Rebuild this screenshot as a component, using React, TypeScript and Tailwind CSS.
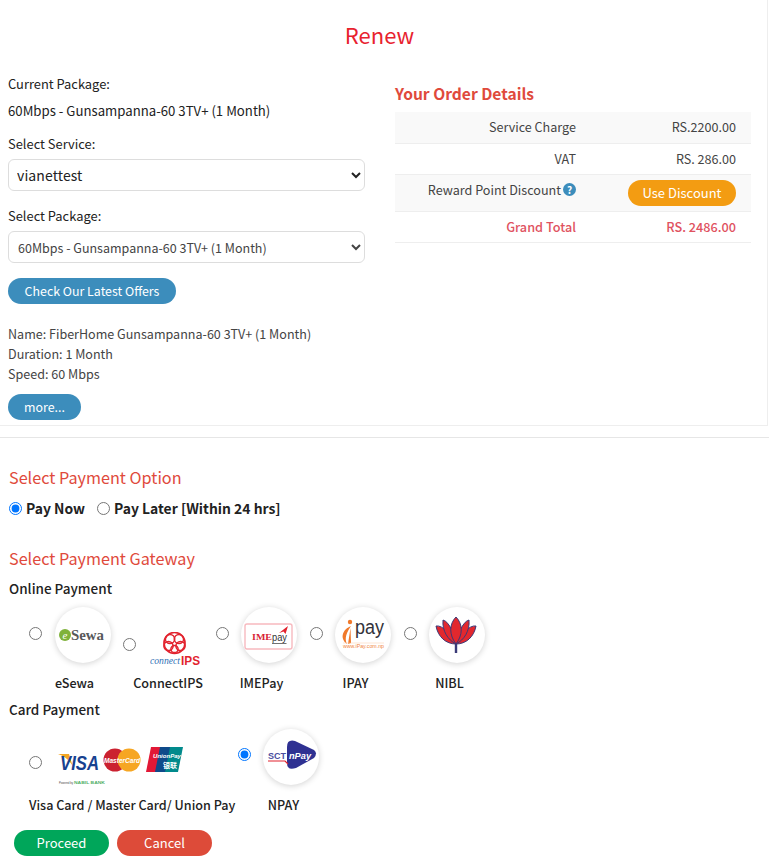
import { ReactNode } from "react";

const Logo = ({ children }: { children: ReactNode }) => (
  <div className="w-14 h-14 rounded-full bg-white shadow-[0_1px_6px_rgba(0,0,0,0.18)] shrink-0 overflow-hidden">
    <svg viewBox="0 0 56 56" className="w-14 h-14">
      {children}
    </svg>
  </div>
);

const EsewaLogo = () => (
  <Logo>
    <circle cx="10" cy="28" r="6" fill="#7fb23a" />
    <text x="10" y="31.5" textAnchor="middle" fontSize="11" fontFamily="Liberation Serif" fontStyle="italic" fill="#fff">e</text>
    <text x="16" y="33" fontSize="14" fontWeight="700" fontFamily="Liberation Serif" fill="#58585a" textLength="33" lengthAdjust="spacingAndGlyphs">Sewa</text>
  </Logo>
);

const ConnectIpsLogo = () => (
  <svg viewBox="0 0 52 37" className="w-[52px] h-[37px] shrink-0">
    <g fill="none" stroke="#e2232e" strokeWidth="1.5">
      <circle cx="24.500" cy="11" r="10.500" strokeWidth="1.700" />
      <circle cx="20" cy="7" r="4.600" />
      <circle cx="29" cy="7" r="4.600" />
      <circle cx="18.500" cy="14" r="4.600" />
      <circle cx="30.500" cy="14" r="4.600" />
      <circle cx="24.500" cy="17" r="3.600" />
    </g>
    <text x="0" y="32" fontSize="10" fontStyle="italic" fontFamily="Liberation Serif" fill="#2f6fb5" textLength="30" lengthAdjust="spacingAndGlyphs">connect</text>
    <text x="31" y="33" fontSize="13" fontWeight="700" fontFamily="Liberation Sans" fill="#e2232e" textLength="19" lengthAdjust="spacingAndGlyphs">IPS</text>
  </svg>
);

const ImePayLogo = () => (
  <Logo>
    <rect x="4" y="17" width="47" height="25" rx="2" fill="#fff" stroke="#f7b9bf" strokeWidth="1.4" />
    <path d="M38 26 L47 19 L44.500 27 L42.500 24.500 Z" fill="#e2232e" />
    <text x="11" y="33" fontSize="8" fontWeight="700" fontFamily="Liberation Serif" fill="#d91f36" textLength="20" lengthAdjust="spacingAndGlyphs">IME</text>
    <text x="31" y="34" fontSize="11" fontFamily="Liberation Sans" fill="#333" textLength="15" lengthAdjust="spacingAndGlyphs">pay</text>
    <path d="M31 36.500 H45.500" stroke="#333" strokeWidth="0.7" />
  </Logo>
);

const IpayLogo = () => (
  <Logo>
    <circle cx="15" cy="15" r="2.200" fill="#f0792b" />
    <path d="M16 19 C8 22 4 31 12 37 C9 31 12 25 16 19 Z M15.500 21 L16 36 L13 37 Z" fill="#f0792b" />
    <text x="20" y="27" fontSize="20" fontFamily="Liberation Sans" fill="#33333b" textLength="29" lengthAdjust="spacingAndGlyphs">pay</text>
    <path d="M8 36 H49" stroke="#f9c8a6" strokeWidth="0.5" />
    <text x="8" y="41" fontSize="4.800" fontFamily="Liberation Sans" fill="#f0853c" textLength="41" lengthAdjust="spacingAndGlyphs">www.iPay.com.np</text>
  </Logo>
);

const NiblLogo = () => (
  <Logo>
    <g fill="#e2282e" stroke="#3a3a78" strokeWidth="1" strokeLinejoin="round">
      <path d="M7 19 C14 18 21 27 27 37 C17 37 9 30 7 19 Z" />
      <path d="M47 19 C40 18 33 27 27 37 C37 37 45 30 47 19 Z" />
      <path d="M14 13 C21 15 25 28 27 37 C19 33 13 24 14 13 Z" />
      <path d="M40 13 C33 15 29 28 27 37 C35 33 41 24 40 13 Z" />
      <path d="M27 10 C34 17 34 28 27 37 C20 28 20 17 27 10 Z" />
    </g>
    <path d="M27 37 V46" stroke="#3a3a78" strokeWidth="2.400" />
  </Logo>
);

const VisaLogo = () => (
  <svg viewBox="0 0 130 42" className="w-[130px] h-[42px] shrink-0">
    <path d="M3 9 H14 L18 22 C15 15 9 11 3 9 Z" fill="#f5a623" />
    <text x="5" y="25" fontSize="20" fontWeight="700" fontStyle="italic" fontFamily="Liberation Sans" fill="#17418f" textLength="39" lengthAdjust="spacingAndGlyphs">VISA</text>
    <circle cx="60" cy="15" r="11.500" fill="#cb2130" />
    <circle cx="74" cy="15" r="11.500" fill="#f6a623" />
    <text x="49" y="17.500" fontSize="7.500" fontWeight="700" fontStyle="italic" fontFamily="Liberation Sans" fill="#fff" textLength="36" lengthAdjust="spacingAndGlyphs">MasterCard</text>
    <path d="M96 2 H108 L103 27 H91 Z" fill="#e21836" />
    <path d="M105 2 H118 L113 27 H100 Z" fill="#0f4a8a" />
    <path d="M115 2 H128 L123 27 H110 Z" fill="#018a8c" />
    <text x="98" y="13" fontSize="6" fontWeight="700" fontStyle="italic" fontFamily="Liberation Sans" fill="#fff" textLength="28" lengthAdjust="spacingAndGlyphs">UnionPay</text>
    <text x="108" y="23" fontSize="7" fontWeight="700" fontFamily="Noto Sans CJK SC" fill="#fff">银联</text>
    <text x="4" y="39" fontSize="2.600" fontFamily="Liberation Sans" fill="#444" textLength="14" lengthAdjust="spacingAndGlyphs">Powered by</text>
    <text x="19" y="39" fontSize="3.400" fontWeight="700" fontFamily="Liberation Sans" fill="#54b06a" textLength="31" lengthAdjust="spacingAndGlyphs">NABIL BANK</text>
  </svg>
);

const NpayLogo = () => (
  <Logo>
    <path d="M24 18 Q24 10 32 12 L51 21 Q55 24 51 29 L33 39 Q24 42 24 34 Z" fill="#2f3192" />
    <text x="5" y="30" fontSize="9.500" fontWeight="700" fontFamily="Liberation Sans" fill="#4a4ea0" textLength="18" lengthAdjust="spacingAndGlyphs">SCT</text>
    <path d="M5 32 H22 L25 35" fill="none" stroke="#e2232e" strokeWidth="1.200" />
    <text x="26" y="30" fontSize="9" fontWeight="700" fontStyle="italic" fontFamily="Liberation Sans" fill="#fff" textLength="22" lengthAdjust="spacingAndGlyphs">nPay</text>
  </Logo>
);

function Gateway({
  name,
  logo,
  radioClass,
  width = "w-[91px]",
  checked = false,
}: {
  name: string;
  logo: ReactNode;
  radioClass: string;
  width?: string;
  checked?: boolean;
}) {
  return (
    <label className={`${width} flex flex-col shrink-0`}>
      <div className="flex items-start h-[66px]">
        <input type="radio" name="gateway" defaultChecked={checked} className={`w-[13px] h-[13px] m-0 shrink-0 ${radioClass}`} />
        {logo}
      </div>
      <span className="text-center text-[12.6px] leading-[20px] font-medium text-[#222] whitespace-nowrap">{name}</span>
    </label>
  );
}

export default function App() {
  return (
    <div className="w-[769px] min-h-[865px] bg-white text-[12.9px] text-[#222] font-['Noto_Sans_CJK_SC',sans-serif] overflow-hidden">
      <section className="h-[426px] border-r border-b border-[#eeeeee] w-[768px] pt-[19px]">
        <h1 className="text-center text-[22px] leading-[30px] text-[#e8222e] pr-[8px]">Renew</h1>
        <div className="flex mt-[24px]">
          <div className="w-[395px] pl-[8px] pr-[30px]">
            <p className="leading-[20px] mt-[1px]">Current Package:</p>
            <p className="leading-[20px] mt-[7px] text-[#222] text-[13.2px]">60Mbps - Gunsampanna-60 3TV+ (1 Month)</p>
            <p className="leading-[20px] mt-[13px]">Select Service:</p>
            <select className="w-full h-[32px] mt-[5px] pl-[4px] border border-[#dddddd] rounded-[6px] bg-white text-[14px] text-[#222] tracking-[0.1px]">
              <option>vianettest</option>
            </select>
            <p className="leading-[20px] mt-[15px]">Select Package:</p>
            <select className="w-full h-[32px] mt-[5px] pl-[5px] border border-[#dddddd] rounded-[6px] bg-white text-[12.5px] text-[#444]">
              <option>60Mbps - Gunsampanna-60 3TV+ (1 Month)</option>
            </select>
            <button className="block h-[26px] w-[168px] mt-[15px] rounded-full bg-[#3c8dbc] text-white text-[12.4px] leading-[26px]">
              Check Our Latest Offers
            </button>
            <div className="mt-[20px] text-[12.55px] leading-[20px] text-[#444]">
              <p>Name: FiberHome Gunsampanna-60 3TV+ (1 Month)</p>
              <p>Duration: 1 Month</p>
              <p>Speed: 60 Mbps</p>
            </div>
            <button className="block h-[26px] w-[73px] mt-[10px] rounded-full bg-[#3c8dbc] text-white text-[12.4px] leading-[24px]">
              more...
            </button>
          </div>
          <div className="w-[356px]">
            <h2 className="text-[15.6px] leading-[24px] font-bold text-[#e04a3c] mt-[8px]">Your Order Details</h2>
            <table className="w-full mt-[7px] text-[12.6px] text-[#444] border-collapse">
              <tbody>
                <tr className="bg-[#f9f9f9] border-b border-[#eeeeee] h-[31px]">
                  <td className="w-[196px] pr-[15px] pt-[1px] text-right">Service Charge</td>
                  <td className="pr-[15px] pt-[1px] text-right">RS.2200.00</td>
                </tr>
                <tr className="border-b border-[#eeeeee] h-[31px]">
                  <td className="pr-[15px] pt-[1px] text-right">VAT</td>
                  <td className="pr-[15px] pt-[1px] text-right">RS. 286.00</td>
                </tr>
                <tr className="bg-[#f9f9f9] border-b border-[#eeeeee] h-[37px]">
                  <td className="pr-[15px] text-right align-top pt-[6px]">
                    <span className="inline-flex items-center gap-[2px]">
                      Reward Point Discount
                      <span className="w-[13px] h-[13px] rounded-full bg-[#3c8dbc] text-white text-[10px] leading-[13px] font-bold text-center">?</span>
                    </span>
                  </td>
                  <td className="pr-[15px] text-right">
                    <button className="h-[26px] w-[108px] rounded-full bg-[#f39c12] text-white text-[13px] leading-[24px]">Use Discount</button>
                  </td>
                </tr>
                <tr className="border-b border-[#eeeeee] h-[31px] font-medium text-[12.7px] text-[#e0525f]">
                  <td className="pr-[15px] pt-[1px] text-right">Grand Total</td>
                  <td className="pr-[15px] pt-[1px] text-right">RS. 2486.00</td>
                </tr>
              </tbody>
            </table>
          </div>
        </div>
      </section>
      <hr className="mt-[11px] border-[#e6e6e6]" />

      <section className="pl-[9px] pt-[27px]">
        <h3 className="text-[16.2px] leading-[24px] text-[#e04a3c]">Select Payment Option</h3>
        <div className="flex items-center mt-[9px] h-[20px] font-semibold text-[13.9px] text-[#222]">
          <label className="flex items-center">
            <input type="radio" name="when" defaultChecked className="w-[13px] h-[13px] m-0 mr-[4px]" />
            Pay Now
          </label>
          <label className="flex items-center ml-[12px]">
            <input type="radio" name="when" className="w-[13px] h-[13px] m-0 mr-[4px]" />
            Pay Later [Within 24 hrs]
          </label>
        </div>
        <h3 className="text-[16.2px] leading-[24px] text-[#e04a3c] mt-[28px]">Select Payment Gateway</h3>
        <p className="mt-[8px] leading-[20px] text-[13.5px] font-medium text-[#222]">Online Payment</p>

        <div className="flex gap-[3px] pl-[20px] mt-[9px]">
          <Gateway name="eSewa" radioClass="mt-[20px] mr-[13px]" logo={<EsewaLogo />} />
          <Gateway name="ConnectIPS" width="w-[90px]" radioClass="mt-[31px] mr-[14px]" logo={<div className="pt-[25px]"><ConnectIpsLogo /></div>} />
          <Gateway name="IMEPay" radioClass="mt-[20px] mr-[12px]" logo={<ImePayLogo />} />
          <Gateway name="IPAY" radioClass="mt-[20px] mr-[12px]" logo={<IpayLogo />} />
          <Gateway name="NIBL" radioClass="mt-[20px] mr-[12px]" logo={<NiblLogo />} />
        </div>

        <p className="mt-[6px] leading-[20px] text-[13.5px] font-medium text-[#222]">Card Payment</p>
        <div className="flex gap-[3px] pl-[20px] mt-[10px]">
          <Gateway name="Visa Card / Master Card/ Union Pay" width="w-[206px]" radioClass="mt-[27px] mr-[13px]" logo={<div className="pt-[16px]"><VisaLogo /></div>} />
          <Gateway name="NPAY" radioClass="mt-[19px] mr-[12px]" checked logo={<NpayLogo />} />
        </div>

        <div className="flex gap-[8px] pl-[5px] mt-[15px]">
          <button className="h-[26px] w-[95px] rounded-full bg-[#00a65a] text-white text-[13px] leading-[24px]">Proceed</button>
          <button className="h-[26px] w-[95px] rounded-full bg-[#dd4b39] text-white text-[13px] leading-[24px]">Cancel</button>
        </div>
      </section>
    </div>
  );
}
